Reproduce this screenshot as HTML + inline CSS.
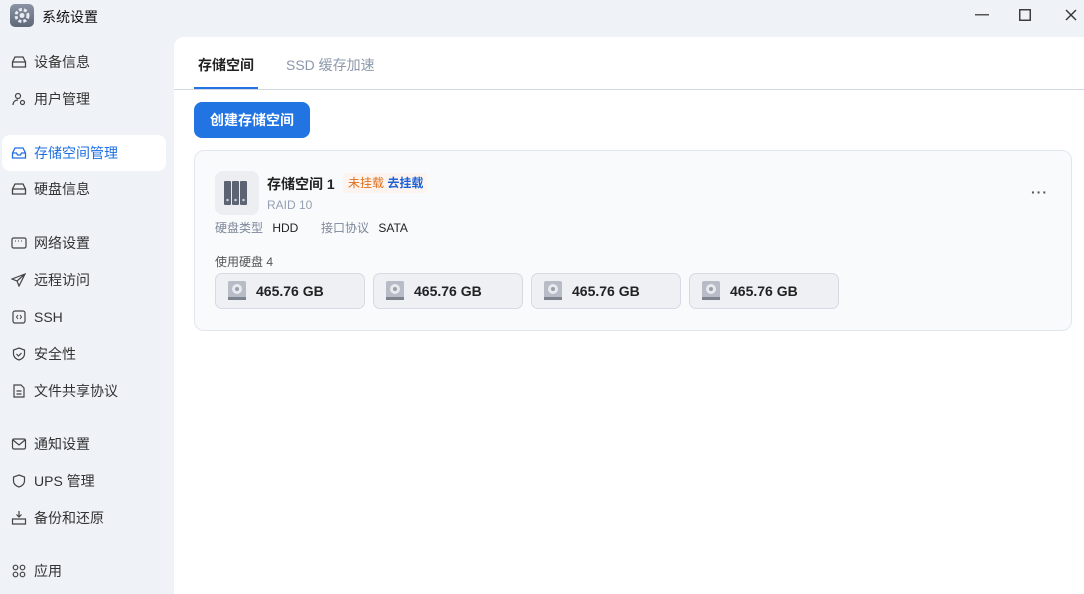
<!DOCTYPE html>
<html><head><meta charset="utf-8"><style>
*{margin:0;padding:0;box-sizing:border-box}
body{width:1084px;height:594px;background:#eff2f7;font-family:"Liberation Sans","Noto Sans CJK SC",sans-serif;position:relative;overflow:hidden;color:#222}
.abs{position:absolute}
.title{left:42px;top:7px;font-size:14px;color:#111}
.logo{left:10px;top:4px;width:24px;height:23px;border-radius:5px;background:linear-gradient(#8a94a4,#5d6778)}
.nav{left:0;width:174px}
.item{position:absolute;left:2px;width:164px;height:36px;font-size:14px;color:#333;padding-left:32px;line-height:36px}
.item svg{position:absolute;left:9px;top:11px}
.item.act{background:#fff;border-radius:8px;color:#1f6fe0}
.main{left:174px;top:37px;width:910px;height:557px;background:#fff;border-top-left-radius:10px}
.tab{font-size:14px;top:18px}
.btn{left:20px;top:65px;width:116px;height:36px;background:#2274e3;border-radius:8px;color:#fff;font-size:14px;font-weight:bold;text-align:center;line-height:36px}
.card{left:20px;top:113px;width:878px;height:181px;border:1px solid #e2e6ee;border-radius:10px;background:#f9fafc}
.disk{top:122px;width:150px;height:36px;border:1px solid #d5dae3;border-radius:7px;background:#eef0f4;font-size:14px;font-weight:bold;color:#222;line-height:34px;padding-left:40px}
.disk svg{position:absolute;left:10px;top:6px}
</style></head><body>
<div class="abs logo"><svg width="24" height="23"><circle cx="12" cy="11.5" r="6" fill="none" stroke="#e8ecf2" stroke-width="3" stroke-dasharray="3 2"/><circle cx="12" cy="11.5" r="2.5" fill="#e8ecf2"/></svg></div>
<div class="abs title">系统设置</div>
<svg class="abs" style="left:975px;top:14px" width="14" height="2"><rect width="14" height="1.5" fill="#555"/></svg>
<svg class="abs" style="left:1019px;top:9px" width="12" height="12"><rect x="0.75" y="0.75" width="10.5" height="10.5" fill="none" stroke="#333" stroke-width="1.4"/></svg>
<svg class="abs" style="left:1065px;top:9px" width="12" height="12"><path d="M1 1L11 11M11 1L1 11" stroke="#333" stroke-width="1.4"/></svg>

<div class="abs nav" style="top:0;height:594px">
<div class="item" style="top:44px"><svg width="16" height="14"><path d="M1.5 7L4 2h8l2.5 5v5h-13z M1.5 7h13" fill="none" stroke="#444" stroke-width="1.3"/></svg>设备信息</div>
<div class="item" style="top:81px"><svg width="16" height="14"><circle cx="7" cy="4" r="2.5" fill="none" stroke="#444" stroke-width="1.2"/><path d="M2 13c0-3 2-5 5-5" fill="none" stroke="#444" stroke-width="1.2"/><circle cx="11.5" cy="10.5" r="2" fill="none" stroke="#444" stroke-width="1.2"/></svg>用户管理</div>
<div class="item act" style="top:135px"><svg width="16" height="14"><path d="M1.5 7L4 2h8l2.5 5v5h-13z M1.5 7h4l1 2h3l1-2h4" fill="none" stroke="#1f6fe0" stroke-width="1.3"/></svg>存储空间管理</div>
<div class="item" style="top:171px"><svg width="16" height="14"><path d="M1.5 7L4 2h8l2.5 5v5h-13z M1.5 7h13" fill="none" stroke="#444" stroke-width="1.3"/></svg>硬盘信息</div>
<div class="item" style="top:225px"><svg width="16" height="14"><rect x="1" y="2" width="14" height="10" rx="1.5" fill="none" stroke="#444" stroke-width="1.2"/><path d="M4 5h1M7 5h1M10 5h1" stroke="#444"/></svg>网络设置</div>
<div class="item" style="top:262px"><svg width="16" height="14"><path d="M14 1L1 6l5 2 2 5z M6 8l8-7" fill="none" stroke="#444" stroke-width="1.2"/></svg>远程访问</div>
<div class="item" style="top:299px"><svg width="16" height="14"><rect x="2" y="1" width="12" height="12" rx="2" fill="none" stroke="#444" stroke-width="1.2"/><path d="M7 5L5.5 7 7 9M9 5l1.5 2L9 9" fill="none" stroke="#444"/></svg>SSH</div>
<div class="item" style="top:336px"><svg width="16" height="14"><path d="M8 1l5.5 2v4c0 3-2.5 5-5.5 6-3-1-5.5-3-5.5-6V3z M5.5 7l2 2 3-3" fill="none" stroke="#444" stroke-width="1.2"/></svg>安全性</div>
<div class="item" style="top:373px"><svg width="16" height="14"><path d="M3 1h7l3 3v9H3z M5.5 7h5M5.5 10h5" fill="none" stroke="#444" stroke-width="1.2"/></svg>文件共享协议</div>
<div class="item" style="top:426px"><svg width="16" height="14"><rect x="1.5" y="2" width="13" height="10" rx="1.5" fill="none" stroke="#444" stroke-width="1.2"/><path d="M2 3l6 5 6-5" fill="none" stroke="#444" stroke-width="1.2"/></svg>通知设置</div>
<div class="item" style="top:463px"><svg width="16" height="14"><path d="M8 1l5.5 2v4c0 3-2.5 5-5.5 6-3-1-5.5-3-5.5-6V3z" fill="none" stroke="#444" stroke-width="1.2"/></svg>UPS 管理</div>
<div class="item" style="top:500px"><svg width="16" height="14"><path d="M8 0v6M5.5 3.5L8 6l2.5-2.5 M1.5 8h13v5h-13z" fill="none" stroke="#444" stroke-width="1.2"/></svg>备份和还原</div>
<div class="item" style="top:553px"><svg width="16" height="14"><circle cx="4.5" cy="3.5" r="2.3" fill="none" stroke="#444" stroke-width="1.2"/><circle cx="11.5" cy="3.5" r="2.3" fill="none" stroke="#444" stroke-width="1.2"/><circle cx="4.5" cy="10.5" r="2.3" fill="none" stroke="#444" stroke-width="1.2"/><circle cx="11.5" cy="10.5" r="2.3" fill="none" stroke="#444" stroke-width="1.2"/></svg>应用</div>
</div>

<div class="abs main">
<div class="abs tab" style="left:24px;color:#222;font-weight:bold">存储空间</div>
<div class="abs tab" style="left:112px;color:#8c98ab">SSD 缓存加速</div>
<div class="abs" style="left:20px;top:50px;width:64px;height:2px;background:#2274e3"></div>
<div class="abs" style="left:0;top:52px;width:910px;height:1px;background:#d3d8e0"></div>
<div class="abs btn">创建存储空间</div>
<div class="abs card">
<div class="abs" style="left:20px;top:20px;width:44px;height:44px;border-radius:8px;background:#eceef2"><svg width="44" height="44"><g fill="#5c6373"><rect x="9" y="10" width="7" height="24" rx="1"/><rect x="17" y="10" width="7" height="24" rx="1"/><rect x="25" y="10" width="7" height="24" rx="1"/></g><g fill="#c9cdd6"><circle cx="12.5" cy="29" r="1.3"/><circle cx="20.5" cy="29" r="1.3"/><circle cx="28.5" cy="29" r="1.3"/></g></svg></div>
<div class="abs" style="left:72px;top:23px;font-size:14px;font-weight:bold;color:#222">存储空间 1</div>
<div class="abs" style="left:148px;top:22px;width:84px;height:20px;background:#fdf3ef;border-radius:4px;font-size:12px;line-height:20px;padding-left:5px"><span style="color:#e0701e">未挂载</span> <span style="color:#2063d6;font-weight:bold">去挂载</span></div>
<div class="abs" style="left:72px;top:47px;font-size:12px;color:#95a0b2">RAID 10</div>
<div class="abs" style="left:20px;top:68px;font-size:12px;color:#7d8799">硬盘类型 <span style="color:#222;margin-left:6px">HDD</span></div>
<div class="abs" style="left:126px;top:68px;font-size:12px;color:#7d8799">接口协议 <span style="color:#222;margin-left:6px">SATA</span></div>
<div class="abs" style="left:20px;top:102px;font-size:12px;color:#555">使用硬盘 4</div>
<div class="abs" style="left:836px;top:33px;font-size:14px;color:#555;letter-spacing:1px;font-weight:bold">···</div>
<div class="abs disk" style="left:20px"><svg width="22" height="22"><rect x="2" y="1" width="18" height="18" rx="2" fill="#b7bcc6"/><circle cx="11" cy="9" r="5" fill="#e8eaee"/><circle cx="11" cy="9" r="2" fill="#9aa0ab"/><rect x="2" y="17" width="18" height="3" fill="#7d838f"/></svg>465.76 GB</div>
<div class="abs disk" style="left:178px"><svg width="22" height="22"><rect x="2" y="1" width="18" height="18" rx="2" fill="#b7bcc6"/><circle cx="11" cy="9" r="5" fill="#e8eaee"/><circle cx="11" cy="9" r="2" fill="#9aa0ab"/><rect x="2" y="17" width="18" height="3" fill="#7d838f"/></svg>465.76 GB</div>
<div class="abs disk" style="left:336px"><svg width="22" height="22"><rect x="2" y="1" width="18" height="18" rx="2" fill="#b7bcc6"/><circle cx="11" cy="9" r="5" fill="#e8eaee"/><circle cx="11" cy="9" r="2" fill="#9aa0ab"/><rect x="2" y="17" width="18" height="3" fill="#7d838f"/></svg>465.76 GB</div>
<div class="abs disk" style="left:494px"><svg width="22" height="22"><rect x="2" y="1" width="18" height="18" rx="2" fill="#b7bcc6"/><circle cx="11" cy="9" r="5" fill="#e8eaee"/><circle cx="11" cy="9" r="2" fill="#9aa0ab"/><rect x="2" y="17" width="18" height="3" fill="#7d838f"/></svg>465.76 GB</div>
</div>
</div>
</body></html>
